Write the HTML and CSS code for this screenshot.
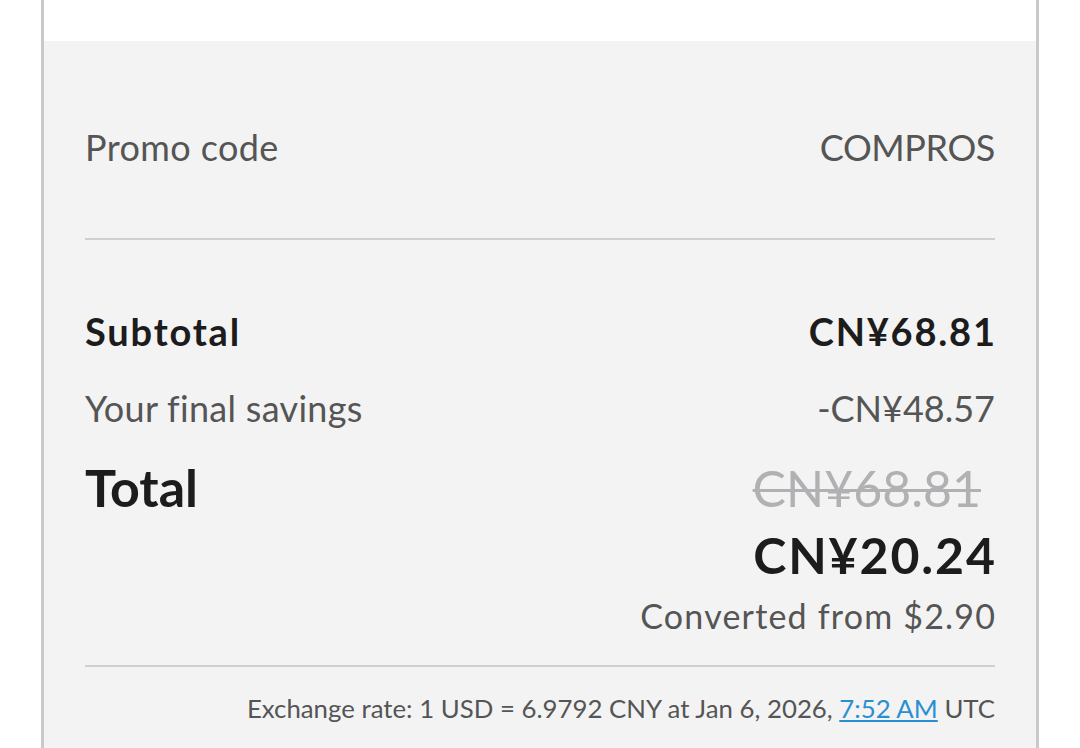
FILE: index.html
```html
<!DOCTYPE html>
<html>
<head>
<meta charset="utf-8">
<link rel="stylesheet" href="styles.css">
</head>
<body>
<div class="frame">
  <div class="top"></div>
  <div class="panel">
    <div class="row promo">
      <span class="label">Promo code</span>
      <span class="value">COMPROS</span>
    </div>
    <hr class="divider">
    <div class="row subtotal">
      <span class="label">Subtotal</span>
      <span class="value">CN¥68.81</span>
    </div>
    <div class="row savings">
      <span class="label">Your final savings</span>
      <span class="value">-CN¥48.57</span>
    </div>
    <div class="total">
      <span class="total-label">Total</span>
      <div class="total-values">
        <span class="old">CN¥68.81</span>
        <span class="new">CN¥20.24</span>
        <span class="converted">Converted from $2.90</span>
      </div>
    </div>
    <hr class="divider rate-divider">
    <p class="rate">Exchange rate: 1 USD = 6.9792 CNY at Jan 6, 2026, <a href="#" class="link">7:52 AM</a> UTC</p>
  </div>
</div>
</body>
</html>
```
FILE: styles.css
```css
html, body {
  margin: 0;
  padding: 0;
  background: #ffffff;
}
body {
  font-family: "Lato", "Noto Sans", sans-serif;
  color: #555555;
}
.frame {
  margin-left: 41px;
  width: 992px;
  height: 748px;
  border-left: 3px solid #c9c9c9;
  border-right: 3px solid #c9c9c9;
  display: flex;
  flex-direction: column;
}
.top {
  height: 41px;
  flex: none;
  background: #ffffff;
}
.panel {
  flex: 1;
  background: #f3f3f3;
  padding: 0 41px;
}
.row {
  display: flex;
  justify-content: space-between;
  align-items: baseline;
}
.promo {
  padding-top: 84px;
  padding-bottom: 69px;
  font-size: 36px;
}
.promo .label {
  letter-spacing: 0.4px;
}
.promo .value {
  letter-spacing: -0.4px;
}
.divider {
  border: 0;
  height: 2px;
  background: #cfcfcf;
  margin: 0;
}
.subtotal {
  margin-top: 68px;
  font-size: 38px;
  font-weight: 700;
  color: #1c1c1c;
  letter-spacing: 1.8px;
}
.subtotal .value {
  margin-right: -1.8px;
}
.savings {
  margin-top: 32px;
  font-size: 36px;
}
.savings .label {
  letter-spacing: 0.3px;
}
.total {
  display: flex;
  justify-content: space-between;
  align-items: baseline;
  margin-top: 26px;
}
.total-label {
  font-size: 52px;
  font-weight: 700;
  color: #1c1c1c;
}
.total-values {
  display: flex;
  flex-direction: column;
  align-items: flex-end;
}
.old {
  font-size: 50px;
  color: #b1b1b4;
  text-decoration: line-through;
  text-decoration-thickness: 3px;
  margin-right: 14px;
}
.new {
  margin-top: 7px;
  font-size: 50px;
  font-weight: 700;
  color: #1c1c1c;
  letter-spacing: 1.9px;
  margin-right: -1.9px;
}
.converted {
  margin-top: 10px;
  font-size: 34px;
  letter-spacing: 1.2px;
  margin-right: -1.2px;
}
.rate-divider {
  margin-top: 29px;
}
.rate {
  margin: 26px 0 0;
  text-align: right;
  font-size: 25.8px;
  color: #555555;
}
.link {
  color: #2a8fd0;
  text-decoration: underline;
}
```
